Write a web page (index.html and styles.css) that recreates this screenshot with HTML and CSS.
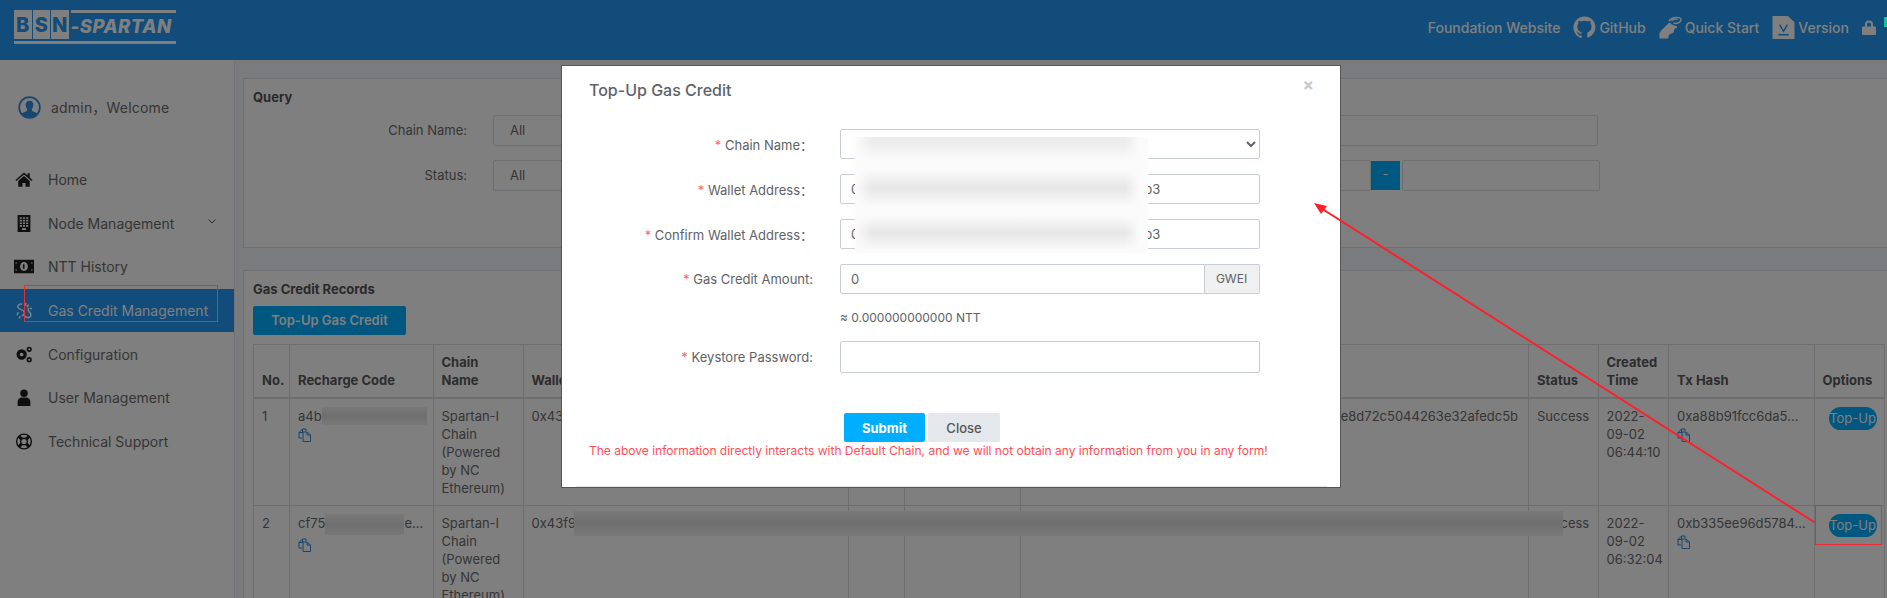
FILE: index.html

```html
<!DOCTYPE html>
<html lang="en">
<head>
    <meta charset="UTF-8">
    <title>BSN-Spartan - Gas Credit Management</title>
    <link rel="stylesheet" href="styles.css">
</head>
<body>
<div class="page">
    <header class="topbar">
        <div class="logo">
            <div class="logo-top">
                <span class="logo-letter">B</span>
                <span class="logo-letter">S</span>
                <span class="logo-letter">N</span>
                <div class="logo-name">
                    <div class="logo-bar"></div>
                    <span class="logo-text">-SPARTAN</span>
                </div>
            </div>
            <div class="logo-bar logo-bar-low"></div>
        </div>
        <nav class="topnav">
            <a class="topnav-link">Foundation Website</a>
            <a class="topnav-link">
                <svg class="top-icon" viewBox="0 0 24 24"><path d="M12 0.6C5.6 0.6 0.5 5.7 0.5 12c0 5 3.2 9.3 7.7 10.9 0.6 0.1 0.8-0.3 0.8-0.6v-2.1c-2.9 0.6-3.6-1.3-3.8-1.8-0.2-0.5-0.8-1.3-1.2-1.5-0.4-0.2-0.9-0.7 0-0.8 0.9 0 1.5 0.8 1.7 1.2 1 1.7 2.6 1.3 3.3 1 0.1-0.8 0.4-1.3 0.7-1.6-2.6-0.3-5.2-1.3-5.2-5.7 0-1.3 0.4-2.3 1.2-3.1-0.1-0.3-0.5-1.5 0.1-3 0 0 1-0.3 3.2 1.2 0.9-0.3 1.9-0.4 2.9-0.4 1 0 2 0.1 2.9 0.4 2.2-1.5 3.2-1.2 3.2-1.2 0.6 1.5 0.2 2.7 0.1 3 0.8 0.8 1.2 1.9 1.2 3.1 0 4.4-2.7 5.4-5.2 5.7 0.4 0.4 0.8 1 0.8 2.1v3.1c0 0.3 0.2 0.7 0.8 0.6 4.5-1.5 7.7-5.8 7.7-10.9C23.5 5.7 18.4 0.6 12 0.6z" fill-rule="evenodd"/><circle class="top-icon-hole" cx="12" cy="11.5" r="6.6"/></svg>
                GitHub
            </a>
            <a class="topnav-link">
                <svg class="top-icon" viewBox="0 0 24 24"><path d="M0.5 23.5v-5.5l2-3.2 7.5-7.3c0.8-0.7 2-0.5 2.4 0.4l0.3 0.6 5.6 2.3c1 0.4 0.8 1.9-0.3 2.1l-1.6 0.2-1.2 4.2-4.7 2.2-1 4z"/><path class="top-icon-line" d="M10.5 5.5C12 1.8 18.5 0.5 22 2.2c1.6 0.8 1.2 3-1 4.4-2 1.2-4.6 1.4-6 0.6M13 5.2c1.2-1.6 4.6-2.4 6.4-1.6"/></svg>
                Quick Start
            </a>
            <a class="topnav-link">
                <svg class="top-icon" viewBox="0 0 23 24"><path d="M0 0h16l7 6.5V24H0z"/><path class="top-icon-cut" d="M7.5 9l4 7 4-7M6 19.5h11"/></svg>
                Version
            </a>
            <svg class="lock-icon" viewBox="0 0 14 15"><path d="M3 6.5V4.5a4 4 0 0 1 8 0v2h2a1 1 0 0 1 1 1V14a1 1 0 0 1-1 1H1a1 1 0 0 1-1-1V7.500a1 1 0 0 1 1-1zM5 6.500h4V4.500a2 2 0 0 0-4 0z" fill-rule="evenodd"/></svg>
        </nav>
    </header>

    <div class="layout">
        <aside class="sidebar">
            <div class="userline">
                <svg class="user-avatar" viewBox="0 0 24 24"><circle class="avatar-ring" cx="12" cy="12" r="10.800"/><path class="avatar-fill" d="M12 5c2.700 0 4.200 2 4 4.600-.1 1.600-.8 3-1.600 3.800l.2 1.800c.1 1 4 1.800 5.400 3.100A10.800 10.800 0 0 1 12 22.800a10.800 10.800 0 0 1-8-4.500c1.400-1.300 5.300-2.100 5.400-3.100l.2-1.800C8.800 12.600 8.100 11.200 8 9.600 7.800 7 9.300 5 12 5z"/></svg>
                <span>admin，Welcome</span>
            </div>
            <ul class="menu">
                <li class="menu-item">
                    <svg class="menu-icon" viewBox="0 0 16 16"><path d="M8 1.500L0 8.400l.9 1L8 3.300l7.100 6.100.9-1-2.600-2.300V2.200h-2v2.100z"/><path d="M8 4.800L2.600 9.500v5.300h3.900v-3.600h3v3.600h3.900V9.500z"/></svg>
                    <span>Home</span>
                </li>
                <li class="menu-item">
                    <svg class="menu-icon" viewBox="0 0 16 16"><path d="M2 0h12v16H2zM4 2v1.500h2V2zm3 0v1.500h2V2zm3 0v1.500h2V2zM4 4.500V6h2V4.500zm3 0V6h2V4.500zm3 0V6h2V4.500zM4 7v1.500h2V7zm3 0v1.500h2V7zm3 0v1.500h2V7zM4 9.500V11h2V9.500zm3 0V11h2V9.500zm3 0V11h2V9.500zM6 12.500V14h4v-1.500z" fill-rule="evenodd"/></svg>
                    <span>Node Management</span>
                    <svg class="menu-chevron" viewBox="0 0 8 5"><path d="M.5.500L4 4 7.500.500"/></svg>
                </li>
                <li class="menu-item">
                    <svg class="menu-icon" viewBox="0 0 18 12"><path d="M0 0h18v12H0zM1.500 2.500v7h1.500l-1.500-1.500v-4L3 2.500zm15 0H15l1.500 1.500v4L15 9.500h1.500zM9 2c-2 0-3.500 1.800-3.500 4S7 10 9 10s3.500-1.800 3.500-4S11 2 9 2z" fill-rule="evenodd"/><path d="M8 4h1.500v4H8z"/></svg>
                    <span>NTT History</span>
                </li>
                <li class="menu-item menu-item-active">
                    <svg class="menu-icon" viewBox="0 0 18 18"><path class="link-stroke" d="M7 2.500C4.500 1.500 2 3 2.500 5.500S8 8 9 10s.5 4-2.500 4.500M3 11l-1.500 3M5 15l-1 2.500M11 1l-.5 3M14 3l-2 2.500M15 7h2.500M9 14c1.500 2 4 3 6 2s1.500-3.500 0-5-2.500-3-1-4.500"/></svg>
                    <span>Gas Credit Management</span>
                </li>
                <li class="menu-item">
                    <svg class="menu-icon" viewBox="0 0 18 18"><circle class="gear" cx="6.500" cy="9" r="3.700"/><circle class="gear-small" cx="14.500" cy="3.500" r="1.900"/><circle class="gear-small" cx="14.500" cy="14.500" r="1.900"/></svg>
                    <span>Configuration</span>
                </li>
                <li class="menu-item">
                    <svg class="menu-icon" viewBox="0 0 16 16"><circle cx="8" cy="4" r="3.500"/><path d="M2 16v-4c0-2.500 2-4 4-4h4c2 0 4 1.500 4 4v4z"/></svg>
                    <span>User Management</span>
                </li>
                <li class="menu-item">
                    <svg class="menu-icon" viewBox="0 0 18 18"><circle class="ring" cx="9" cy="9" r="7.800"/><circle class="ring" cx="9" cy="9" r="3.500"/><path class="ring-bar" d="M3.500 3.500l3 3M14.500 3.500l-3 3M3.500 14.500l3-3M14.500 14.500l-3-3"/></svg>
                    <span>Technical Support</span>
                </li>
            </ul>
        </aside>

        <main class="content">
            <section class="card card-query">
                <h4 class="card-title">Query</h4>
                <div class="query-row">
                    <label class="query-label">Chain Name:</label>
                    <div class="query-box query-box-full">All</div>
                </div>
                <div class="query-row">
                    <label class="query-label">Status:</label>
                    <div class="query-box query-box-status">All</div>
                    <span class="query-dash">-</span>
                    <div class="query-box query-box-date"></div>
                </div>
            </section>

            <section class="card card-records">
                <h4 class="card-title">Gas Credit Records</h4>
                <a class="btn-primary">Top-Up Gas Credit</a>
                <table class="records">
                    <colgroup>
                        <col class="col-no">
                        <col class="col-code">
                        <col class="col-chain">
                        <col class="col-wallet">
                        <col class="col-a">
                        <col class="col-b">
                        <col class="col-hash">
                        <col class="col-status">
                        <col class="col-time">
                        <col class="col-tx">
                        <col class="col-opt">
                    </colgroup>
                    <thead>
                        <tr>
                            <th>No.</th>
                            <th>Recharge Code</th>
                            <th>Chain Name</th>
                            <th>Wallet Address</th>
                            <th></th>
                            <th></th>
                            <th></th>
                            <th>Status</th>
                            <th>Created Time</th>
                            <th>Tx Hash</th>
                            <th>Options</th>
                        </tr>
                    </thead>
                    <tbody>
                        <tr>
                            <td>1</td>
                            <td>
                                <div class="nowrap">a4b<span class="smear smear-code-a"></span></div>
                                <svg class="copy-icon" viewBox="0 0 14 14"><path d="M4.500 1L1 4.500V10h3M4.500 1H8v2M4.500 1v3.500H1M5 4h4l3.500 3v6.500H5zM9 4v3h3.500"/></svg>
                            </td>
                            <td>Spartan-I Chain (Powered by NC Ethereum)</td>
                            <td class="nowrap">0x43f9</td>
                            <td></td>
                            <td></td>
                            <td class="cell-right">ee8d72c5044263e32afedc5b</td>
                            <td>Success</td>
                            <td>2022-09-02 06:44:10</td>
                            <td>
                                <div class="nowrap">0xa88b91fcc6da5...</div>
                                <svg class="copy-icon" viewBox="0 0 14 14"><path d="M4.500 1L1 4.500V10h3M4.500 1H8v2M4.500 1v3.500H1M5 4h4l3.500 3v6.500H5zM9 4v3h3.500"/></svg>
                            </td>
                            <td><a class="btn-topup">Top-Up</a></td>
                        </tr>
                        <tr>
                            <td>2</td>
                            <td>
                                <div class="nowrap">cf75<span class="smear smear-code-b"></span>e...</div>
                                <svg class="copy-icon" viewBox="0 0 14 14"><path d="M4.500 1L1 4.500V10h3M4.500 1H8v2M4.500 1v3.500H1M5 4h4l3.500 3v6.500H5zM9 4v3h3.500"/></svg>
                            </td>
                            <td>Spartan-I Chain (Powered by NC Ethereum)</td>
                            <td class="nowrap">0x43f9</td>
                            <td></td>
                            <td></td>
                            <td></td>
                            <td>Success</td>
                            <td>2022-09-02 06:32:04</td>
                            <td>
                                <div class="nowrap">0xb335ee96d5784...</div>
                                <svg class="copy-icon" viewBox="0 0 14 14"><path d="M4.500 1L1 4.500V10h3M4.500 1H8v2M4.500 1v3.500H1M5 4h4l3.500 3v6.500H5zM9 4v3h3.500"/></svg>
                            </td>
                            <td><a class="btn-topup">Top-Up</a></td>
                        </tr>
                    </tbody>
                </table>
            </section>
        </main>
    </div>

    <!-- blurred wallet address in row 2, runs across several columns -->
    <div class="smear smear-row"></div>

    <div class="backdrop"></div>
    <div class="corner-badge"></div>

    <div class="modal">
        <h3 class="modal-title">Top-Up Gas Credit</h3>
        <span class="modal-close">×</span>
        <form class="modal-form">
            <div class="form-row">
                <label class="form-label"><i>*</i> Chain Name：</label>
                <select class="form-field"><option></option></select>
            </div>
            <div class="form-row">
                <label class="form-label"><i>*</i> Wallet Address：</label>
                <div class="form-field">0x<span class="field-gap"></span>b3</div>
            </div>
            <div class="form-row">
                <label class="form-label"><i>*</i> Confirm Wallet Address：</label>
                <div class="form-field">0x<span class="field-gap"></span>b3</div>
            </div>
            <div class="form-row">
                <label class="form-label"><i>*</i> Gas Credit Amount:</label>
                <div class="input-group">
                    <input class="form-field group-input" type="text" value="0">
                    <span class="group-addon">GWEI</span>
                </div>
            </div>
            <p class="form-note">≈ 0.000000000000 NTT</p>
            <div class="form-row">
                <label class="form-label"><i>*</i> Keystore Password:</label>
                <input class="form-field form-field-tall" type="password">
            </div>
            <div class="form-actions">
                <button class="btn-submit" type="button">Submit</button>
                <button class="btn-close" type="button">Close</button>
            </div>
            <p class="form-warning">The above information directly interacts with Default Chain, and we will not obtain any information from you in any form!</p>
        </form>
        <div class="modal-foot"></div>
        <div class="modal-smear"></div>
    </div>

    <!-- red annotation drawn on the screenshot -->
    <svg class="annotation" viewBox="0 0 1887 598">
        <rect class="note-box" x="24.500" y="285.500" width="193" height="36"/>
        <rect class="note-box" x="1815.500" y="505.500" width="66" height="39"/>
        <line class="note-line" x1="1320" y1="207.500" x2="1814" y2="522"/>
        <polygon class="note-head" points="1314,203 1327,206 1321,214"/>
    </svg>
</div>
</body>
</html>
```

FILE: styles.css

```css
* {
    box-sizing: border-box;
}
body {
    margin: 0;
    font-family: Inter, "Noto Sans CJK SC", sans-serif;
    font-size: 13px;
    color: #6b6b6b;
}
.page {
    position: relative;
    height: 598px;
    overflow: hidden;
    background: #fff;
}

/* top bar */
.topbar {
    height: 60px;
    background: #2398f4;
    display: flex;
    justify-content: space-between;
    padding: 10px 11px 0 14px;
}
.logo {
    width: 162px;
}
.logo-top {
    display: flex;
    height: 29px;
    gap: 1px;
}
.logo-letter {
    width: 17.500px;
    background: #fff;
    color: #2398f4;
    font-size: 20px;
    font-weight: 800;
    line-height: 31px;
    text-align: center;
}
.logo-name {
    flex: 1;
    margin-left: 1px;
}
.logo-bar {
    height: 3px;
    background: #fff;
}
.logo-bar-low {
    margin-top: 2px;
}
.logo-text {
    display: block;
    color: #fff;
    font-size: 18.500px;
    font-weight: 800;
    font-style: italic;
    line-height: 26px;
    white-space: nowrap;
    letter-spacing: .5px;
}
.topnav {
    display: flex;
    align-items: center;
    height: 34px;
    gap: 13px;
    color: #fff;
}
.topnav-link {
    display: flex;
    align-items: center;
    gap: 3px;
    font-size: 14px;
    font-weight: 500;
}
.top-icon {
    width: 23px;
    height: 23px;
    fill: #fff;
}
.top-icon-hole {
    fill: #2398f4;
}
.top-icon-line {
    fill: none;
    stroke: #fff;
    stroke-width: 1.500;
}
.top-icon-cut {
    fill: none;
    stroke: #2398f4;
    stroke-width: 1.500;
}
.lock-icon {
    width: 14px;
    height: 15px;
    fill: #fff;
}
.corner-badge {
    position: absolute;
    right: 0;
    top: 17px;
    width: 3px;
    height: 10px;
    background: #14c29c;
}

/* sidebar */
.layout {
    display: flex;
    height: 538px;
}
.sidebar {
    width: 235px;
    flex: none;
    background: #fff;
    border-right: 1px solid #e6e7ea;
}
.userline {
    height: 98px;
    padding: 0 0 4px 18px;
    display: flex;
    align-items: center;
    gap: 10px;
    font-size: 14px;
    letter-spacing: .2px;
}
.user-avatar {
    width: 23px;
    height: 23px;
}
.avatar-ring {
    fill: none;
    stroke: #2d8ee0;
    stroke-width: 1.800;
}
.avatar-fill {
    fill: #2d8ee0;
}
.menu {
    list-style: none;
    margin: 0;
    padding: 0;
}
.menu-item {
    height: 43.600px;
    padding: 0 18px 0 14px;
    display: flex;
    align-items: center;
    font-size: 14px;
    color: #6b6b6b;
}
.menu-item span {
    margin-left: 14px;
}
.menu-icon {
    width: 20px;
    height: 17px;
    fill: #1f1f1f;
    flex: none;
}
.menu-chevron {
    width: 8px;
    height: 5px;
    margin-left: auto;
    fill: none;
    stroke: #555;
    margin-top: -4px;
}
.menu-item-active {
    background: #2398f4;
    color: #fff;
}
.link-stroke {
    fill: none;
    stroke: #fff;
    stroke-width: 1.600;
}
.gear {
    fill: none;
    stroke: #1f1f1f;
    stroke-width: 3.500;
}
.gear-small {
    fill: none;
    stroke: #1f1f1f;
    stroke-width: 1.700;
}
.ring {
    fill: none;
    stroke: #1f1f1f;
    stroke-width: 1.500;
}
.ring-bar {
    fill: none;
    stroke: #1f1f1f;
    stroke-width: 3.200;
}

/* main column */
.content {
    flex: 1;
    min-width: 0;
    overflow: hidden;
    background: #f5f6f9;
    padding: 18px 0 0 8px;
}
.card {
    width: 1650px;
    background: #fff;
    border: 1px solid #dfe1e6;
    padding: 8px 9px;
}
.card-query {
    height: 170px;
}
.card-records {
    margin-top: 22px;
    height: 400px;
}
.card-title {
    margin: 0;
    font-size: 13px;
    line-height: 20px;
    font-weight: 700;
    color: #555;
}
.query-row {
    display: flex;
    align-items: stretch;
    margin-top: 8px;
    height: 31px;
}
.query-row + .query-row {
    margin-top: 14px;
}
.query-label {
    width: 214px;
    margin-right: 26px;
    text-align: right;
    line-height: 31px;
}
.query-box {
    border: 1px solid #dcdee3;
    border-radius: 2px;
    line-height: 29px;
    padding-left: 16px;
}
.query-box-full {
    width: 1105px;
}
.query-box-status {
    width: 878px;
}
.query-dash {
    width: 29px;
    height: 29px;
    margin: 1px 0;
    background: #00aeff;
    color: #fff;
    text-align: center;
    line-height: 27px;
}
.query-box-date {
    width: 198px;
    margin-left: 2px;
}
.btn-primary {
    display: block;
    width: 153px;
    height: 29px;
    margin: 7px 0 9px;
    border-radius: 2px;
    background: #00aeff;
    color: #fff;
    font-weight: 600;
    text-align: center;
    line-height: 29px;
}

/* records table */
.records {
    width: 1631px;
    table-layout: fixed;
    border-collapse: collapse;
    line-height: 18px;
}
.records th,
.records td {
    border: 1px solid #dcdcdc;
    padding: 8px;
    text-align: left;
    vertical-align: top;
    overflow: hidden;
}
.records th {
    vertical-align: bottom;
    border-bottom-width: 2px;
    font-weight: 700;
    color: #5a5a5a;
}
.col-no { width: 36px; }
.col-code { width: 143.500px; }
.col-chain { width: 90px; }
.col-wallet { width: 325.500px; }
.col-a { width: 56px; }
.col-b { width: 116px; }
.col-hash { width: 508px; }
.col-status { width: 69.500px; }
.col-time { width: 70.500px; }
.col-tx { width: 145.500px; }
.col-opt { width: 70px; }
.nowrap {
    white-space: nowrap;
}
.records .cell-right {
    text-align: right;
    padding-right: 10px;
    white-space: nowrap;
}
.smear {
    display: inline-block;
    height: 18px;
    vertical-align: top;
    background: linear-gradient(#f2f2f2, #dedede 50%, #f2f2f2);
}
.smear-code-a {
    width: 105px;
}
.smear-code-b {
    width: 79px;
    height: 21px;
}
.smear-row {
    position: absolute;
    left: 574px;
    top: 511px;
    width: 989px;
    height: 25px;
}
.copy-icon {
    display: block;
    width: 14px;
    height: 14px;
    margin-top: 3px;
    fill: none;
    stroke: #2f86d8;
}
.btn-topup {
    display: block;
    width: 48px;
    height: 23px;
    margin-left: 6px;
    border-radius: 12px;
    background: #00aeff;
    color: #fff;
    text-align: center;
    line-height: 23px;
}

/* dimmed layer and dialog */
.backdrop {
    position: absolute;
    inset: 0;
    background: rgba(0, 0, 0, .5);
}
.modal {
    position: absolute;
    left: 561px;
    top: 65px;
    width: 780px;
    background: #fff;
    border: 1px solid #555;
    color: #606266;
}
.modal-title {
    margin: 12px 0 0 27px;
    font-size: 16px;
    line-height: 24px;
    font-weight: 500;
}
.modal-close {
    position: absolute;
    right: 26px;
    top: 9px;
    font-size: 17px;
    font-weight: 700;
    line-height: 20px;
    color: #c8c8c8;
}
.modal-form {
    margin-top: 27px;
}
.form-row {
    display: grid;
    grid-template-columns: 251px 419.500px;
    column-gap: 27px;
    margin-bottom: 15px;
    align-items: center;
}
.form-label {
    text-align: right;
    white-space: nowrap;
}
.form-label i {
    color: #f56c6c;
    font-style: normal;
}
.form-field {
    height: 30px;
    width: 100%;
    border: 1px solid #c9cdd6;
    border-radius: 2px;
    background: #fff;
    padding: 0 10px;
    font-family: inherit;
    font-size: 13px;
    color: #606266;
    line-height: 28px;
    white-space: nowrap;
}
.form-field-tall {
    height: 32px;
}
.field-gap {
    display: inline-block;
    width: 278px;
}
.input-group {
    display: flex;
}
.group-input {
    flex: 1;
    min-width: 0;
    border-radius: 2px 0 0 2px;
}
.group-addon {
    width: 55px;
    height: 30px;
    border: 1px solid #c9cdd6;
    border-left: 0;
    border-radius: 0 2px 2px 0;
    background: #f0f0f0;
    text-align: center;
    line-height: 28px;
    font-size: 12px;
}
.form-note {
    margin: 0 0 14px 278px;
    font-size: 12px;
    line-height: 18px;
    padding-top: 0;
}
.form-actions {
    margin: 40px 0 0 282px;
    display: flex;
    gap: 3px;
}
.form-actions button {
    height: 29px;
    border: 0;
    border-radius: 2px;
    font-family: inherit;
    font-size: 13px;
}
.btn-submit {
    width: 81px;
    background: #00aeff;
    color: #fff;
    font-weight: 700;
}
.btn-close {
    width: 72px;
    background: #e4e7eb;
    color: #555;
    font-weight: 500;
}
.form-warning {
    margin: 0 0 0 27px;
    color: #ff4d55;
    font-size: 12px;
    line-height: 18px;
    white-space: nowrap;
}
.modal-foot {
    margin: 26px 13px 0 14px;
    height: 1px;
    background: #e6e6e6;
}
.modal-smear {
    position: absolute;
    left: 293px;
    top: 71px;
    width: 293px;
    height: 116px;
    background:
        linear-gradient(90deg, #fbfbfb, rgba(251, 251, 251, 0) 18px, rgba(251, 251, 251, 0) 270px, #fbfbfb 285px),
        linear-gradient(#ececec, #ececec 6px, #fbfbfb 24px, #fbfbfb 32px, #e6e6e6 51px, #fbfbfb 70px, #fbfbfb 78px, #e6e6e6 96px, #fbfbfb 114px);
}

/* annotation */
.annotation {
    position: absolute;
    left: 0;
    top: 0;
    width: 1887px;
    height: 598px;
    pointer-events: none;
}
.note-box {
    fill: none;
    stroke: #ee2a30;
}
.note-line {
    stroke: #ff1f2a;
    stroke-width: 2;
}
.note-head {
    fill: #ff1f2a;
}
```
